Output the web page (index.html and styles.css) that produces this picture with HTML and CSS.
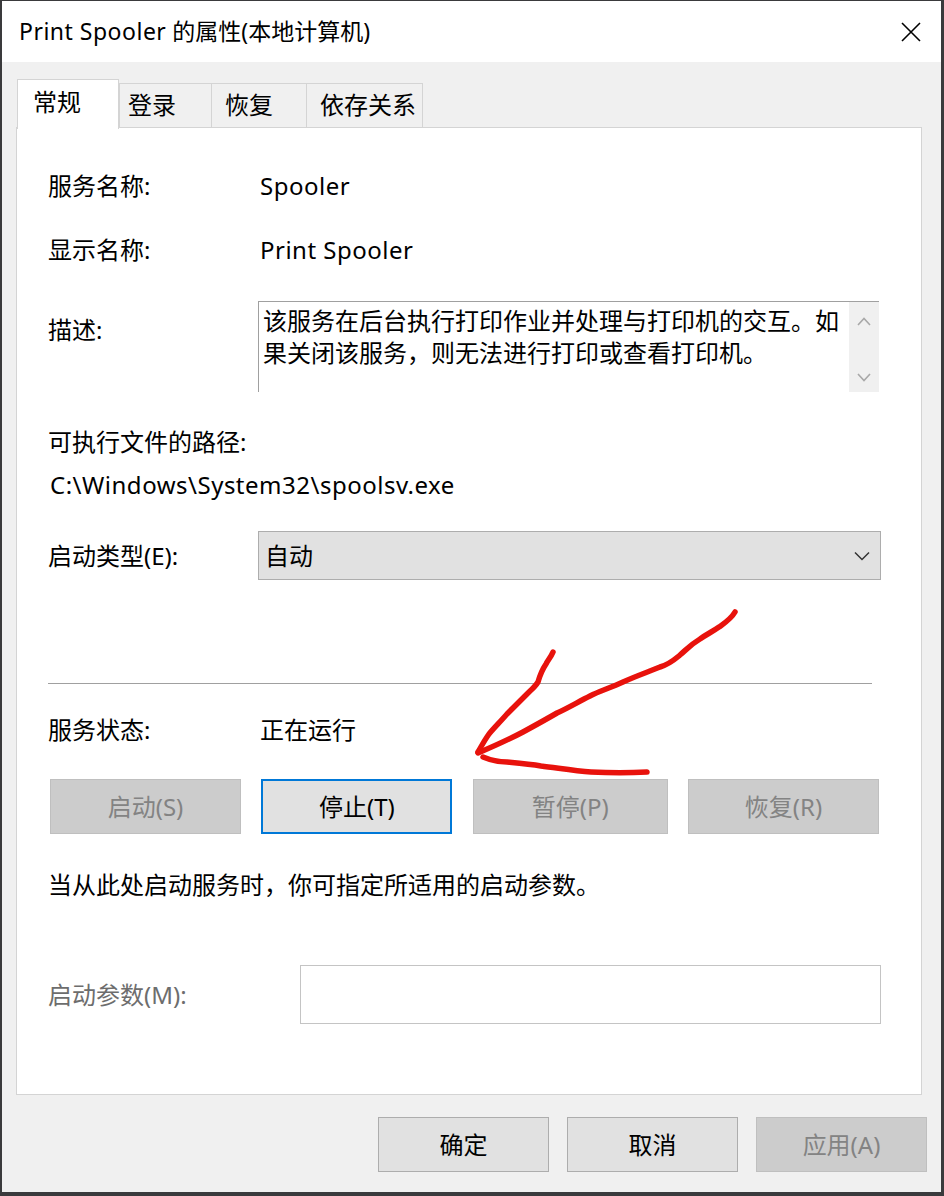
FILE: index.html
```html
<!DOCTYPE html>
<html lang="zh-CN">
<head>
<meta charset="utf-8">
<title>Print Spooler 的属性(本地计算机)</title>
<link rel="stylesheet" href="styles.css">
</head>
<body>
<div class="window">
  <div class="titlebar">
    <span class="title"><span class="latin">Print Spooler</span> 的属性(本地计算机)</span>
    <svg class="close" width="20" height="20" viewBox="0 0 20 20"><path d="M1 1 L19 19 M19 1 L1 19" stroke="#000" stroke-width="1.6" fill="none"/></svg>
  </div>
  <div class="content">
    <div class="tabs">
      <div class="tab tab-general active">常规</div>
      <div class="tab tab-logon">登录</div>
      <div class="tab tab-recovery">恢复</div>
      <div class="tab tab-deps">依存关系</div>
    </div>
    <div class="panel">
      <div class="row">
        <div class="label">服务名称:</div>
        <div class="value latin">Spooler</div>
      </div>
      <div class="row r-display">
        <div class="label">显示名称:</div>
        <div class="value latin">Print Spooler</div>
      </div>
      <div class="row r-desc">
        <div class="label desc-label">描述:</div>
        <div class="desc">
          <div class="desc-text">该服务在后台执行打印作业并处理与打印机的交互。如果关闭该服务，则无法进行打印或查看打印机。</div>
          <div class="scrollbar">
            <svg width="14" height="9" viewBox="0 0 14 9"><path d="M1 8 L7 1.5 L13 8" stroke="#a8a8a8" stroke-width="1.6" fill="none"/></svg>
            <svg width="14" height="9" viewBox="0 0 14 9"><path d="M1 1 L7 7.5 L13 1" stroke="#a8a8a8" stroke-width="1.6" fill="none"/></svg>
          </div>
        </div>
      </div>
      <div class="row r-pathlabel">可执行文件的路径:</div>
      <div class="row r-path latin">C:\Windows\System32\spoolsv.exe</div>
      <div class="row r-type">
        <div class="label">启动类型(E):</div>
        <div class="combo">
          <span>自动</span>
          <svg width="16" height="10" viewBox="0 0 16 10"><path d="M1 1.5 L8 8.5 L15 1.5" stroke="#333" stroke-width="1.5" fill="none"/></svg>
        </div>
      </div>
      <div class="sep"></div>
      <div class="row r-status">
        <div class="label">服务状态:</div>
        <div class="value">正在运行</div>
      </div>
      <div class="btnrow">
        <button class="btn disabled w191">启动(S)</button>
        <button class="btn focus w191">停止(T)</button>
        <button class="btn disabled w195">暂停(P)</button>
        <button class="btn disabled w191">恢复(R)</button>
      </div>
      <div class="row hint">当从此处启动服务时，你可指定所适用的启动参数。</div>
      <div class="row r-param">
        <div class="label param-label">启动参数(M):</div>
        <div class="param-input"></div>
      </div>
    </div>
    <div class="footer">
      <button class="btn fbtn">确定</button>
      <button class="btn fbtn">取消</button>
      <button class="btn fbtn disabled">应用(A)</button>
    </div>
  </div>
</div>
<svg class="annot" width="944" height="1196" viewBox="0 0 944 1196">
  <g stroke="#e8120c" stroke-width="5.5" fill="none" stroke-linecap="round" stroke-linejoin="round">
    <path d="M735 612 C731 619 726 622 719 627 C712 632 707 634 700 639 C690 645 686 650 680 655 C674 660 670 664 660 667 C648 672 636 676 623 682 C610 688 600 691 590 696 C578 702 568 708 557 713 C545 720 534 726 523 732 C508 740 492 747 478 753"/>
    <path d="M553 652 C551 657 548 660 546 664 C542 670 540 675 538 682 C535 687 531 690 527 694 C520 701 513 708 507 714 C500 722 494 728 489 734 C484 741 481 747 478 752"/>
    <path d="M483 757 C490 760 498 762 507 762 C518 763 530 764 541 766 C558 768 574 771 591 772 C610 773 630 773 647 772"/>
  </g>
</svg>
</body>
</html>
```
FILE: styles.css
```css
html, body {
  margin: 0;
  padding: 0;
}
body {
  background: #3a3a3c;
  width: 944px;
  height: 1196px;
  overflow: hidden;
  padding: 1px 0 0 2px;
  box-sizing: border-box;
  position: relative;
  font-family: "Noto Sans", "Noto Sans CJK SC", sans-serif;
  color: #000;
}
.window {
  width: 939px;
  height: 1191px;
  background: #f0f0f0;
  display: flex;
  flex-direction: column;
}
.titlebar {
  height: 61px;
  flex: none;
  background: #fff;
  display: flex;
  align-items: center;
  justify-content: space-between;
  padding: 0 20px 0 17px;
}
.title {
  font-size: 23px;
  line-height: 30px;
  color: #000;
  margin-top: -2px;
}
.latin {
  letter-spacing: 0.5px;
}
.close {
  display: block;
}
.content {
  padding: 17px 0 0 14px;
}
.tabs {
  display: flex;
  align-items: flex-end;
  height: 48px;
  padding-left: 1px;
}
.tab {
  height: 44px;
  box-sizing: border-box;
  border: 1px solid #d4d4d4;
  border-bottom: none;
  background: #f0f0f0;
  font-size: 24px;
  line-height: 32px;
  padding-top: 5px;
}
.tab.active {
  height: 50px;
  margin-bottom: -2px;
  background: #fff;
  position: relative;
  z-index: 1;
  padding-top: 6px;
}
.tab-general { width: 102px; padding-left: 15px; }
.tab-logon { width: 93px; padding-left: 8px; }
.tab-recovery { width: 96px; padding-left: 13px; margin-left: -1px; }
.tab-deps { width: 117px; padding-left: 13px; margin-left: -1px; }
.panel {
  width: 906px;
  height: 968px;
  box-sizing: border-box;
  background: #fff;
  border: 1px solid #d4d4d4;
  padding: 42px 40px 0 31px;
}
.row {
  display: flex;
  align-items: center;
  font-size: 24px;
  line-height: 32px;
}
.label {
  width: 210px;
  flex: none;
}
.value {
  padding-left: 2px;
}
.r-display { margin-top: 32px; }
.r-desc {
  margin-top: 35px;
  align-items: flex-start;
}
.desc-label { margin-top: 13px; }
.desc {
  width: 621px;
  height: 91px;
  box-sizing: border-box;
  border-top: 1px solid #a0a0a0;
  border-left: 1px solid #a0a0a0;
  display: flex;
}
.desc-text {
  width: 590px;
  box-sizing: border-box;
  padding: 3px 0 0 4px;
  font-size: 24px;
  line-height: 32px;
}
.scrollbar {
  width: 30px;
  background: #f0f0f0;
  display: flex;
  flex-direction: column;
  align-items: center;
  justify-content: space-between;
  padding: 15px 0 10px;
  box-sizing: border-box;
}
.scrollbar svg { display: block; }
.r-pathlabel { margin-top: 34px; }
.r-path { margin-top: 11px; padding-left: 2px; }
.r-type { margin-top: 30px; }
.combo {
  width: 623px;
  height: 49px;
  box-sizing: border-box;
  background: #e1e1e1;
  border: 1px solid #adadad;
  display: flex;
  align-items: center;
  justify-content: space-between;
  padding: 0 10px 0 6px;
}
.combo svg { display: block; }
.sep {
  margin-top: 103px;
  width: 824px;
  height: 1px;
  background: #a0a0a0;
}
.r-status { margin-top: 30px; }
.btnrow {
  margin: 33px 0 0 2px;
  width: 829px;
  display: flex;
  justify-content: space-between;
}
.btn {
  height: 55px;
  box-sizing: border-box;
  border: 1px solid #adadad;
  background: #e1e1e1;
  font-family: inherit;
  font-size: 24px;
  line-height: 32px;
  color: #000;
  padding: 0;
  margin: 0;
  display: flex;
  align-items: center;
  justify-content: center;
}
.btn.disabled {
  background: #cccccc;
  border-color: #bfbfbf;
  color: #838383;
}
.btn.focus {
  border: 2px solid #0078d7;
}
.w191 { width: 191px; }
.w195 { width: 195px; }
.hint { margin-top: 35px; }
.r-param { margin-top: 64px; }
.param-label {
  width: 252px;
  color: #6d6d6d;
}
.param-input {
  width: 581px;
  height: 59px;
  box-sizing: border-box;
  background: #fff;
  border: 1px solid #c4c4c4;
}
.footer {
  display: flex;
  justify-content: flex-end;
  gap: 18px;
  padding: 22px 14px 0 0;
}
.fbtn { width: 171px; }
.annot {
  position: absolute;
  top: 0;
  left: 0;
  pointer-events: none;
}
```
